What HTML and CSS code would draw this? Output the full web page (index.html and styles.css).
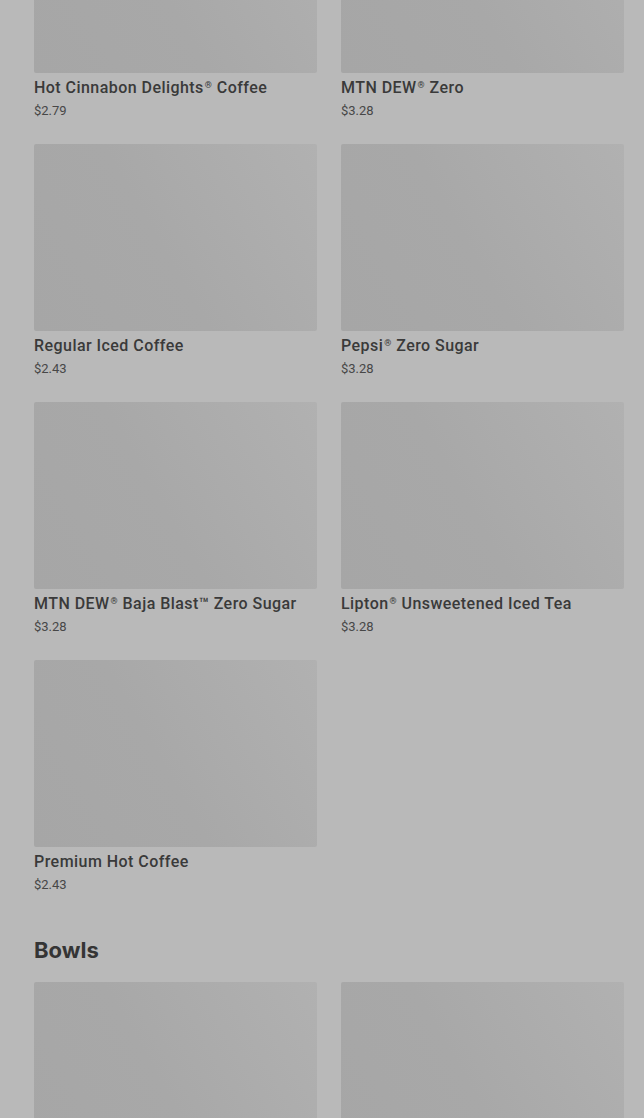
FILE: index.html
```html
<!DOCTYPE html>
<html lang="en">
<head>
  <meta charset="UTF-8">
  <meta name="viewport" content="width=device-width, initial-scale=1.0">
  <link rel="stylesheet" href="styles.css">
</head>
<body>
  <!-- Drinks -->
  <div class="menu">
    <div class="item-grid first">
      <div class="item">
        <div class="item-image"></div>
        <div class="item-name">Hot Cinnabon Delights<sup>®</sup> Coffee</div>
        <div class="item-price">$2.79</div>
      </div>
      <div class="item">
        <div class="item-image"></div>
        <div class="item-name">MTN DEW<sup>®</sup> Zero</div>
        <div class="item-price">$3.28</div>
      </div>
      <div class="item">
        <div class="item-image"></div>
        <div class="item-name">Regular Iced Coffee</div>
        <div class="item-price">$2.43</div>
      </div>
      <div class="item">
        <div class="item-image"></div>
        <div class="item-name">Pepsi<sup>®</sup> Zero Sugar</div>
        <div class="item-price">$3.28</div>
      </div>
      <div class="item">
        <div class="item-image"></div>
        <div class="item-name">MTN DEW<sup>®</sup> Baja Blast™ Zero Sugar</div>
        <div class="item-price">$3.28</div>
      </div>
      <div class="item">
        <div class="item-image"></div>
        <div class="item-name">Lipton<sup>®</sup> Unsweetened Iced Tea</div>
        <div class="item-price">$3.28</div>
      </div>
      <div class="item">
        <div class="item-image"></div>
        <div class="item-name">Premium Hot Coffee</div>
        <div class="item-price">$2.43</div>
      </div>
    </div>

    <!-- Bowls -->
    <h2 class="section-title">Bowls</h2>
    <div class="item-grid">
      <div class="item">
        <div class="item-image"></div>
      </div>
      <div class="item">
        <div class="item-image"></div>
      </div>
    </div>
  </div>
</body>
</html>
```

FILE: styles.css
```css
* {
  margin: 0;
  padding: 0;
  box-sizing: border-box;
}

body {
  background: #b9b9b9;
  font-family: Roboto, "Liberation Sans", sans-serif;
  color: #353535;
  overflow: hidden;
}

.menu {
  padding: 0 20px 0 34px;
}

/* grid of menu items */
.item-grid {
  display: grid;
  grid-template-columns: 1fr 1fr;
  column-gap: 24px;
  row-gap: 24px;
}

.item-grid.first {
  margin-top: -114px; /* page is scrolled */
}

.item-image {
  height: 187px;
  border-radius: 2px;
  background: linear-gradient(60deg, #a6a6a6 0%, #a8a8a8 45%, #b1b1b1 100%);
}

.item-name {
  margin-top: 5px;
  height: 20px;
  font-size: 16px;
  line-height: 20px;
  font-weight: 500;
  letter-spacing: 0.45px;
  color: #3a3a3a;
}

.item-name sup {
  font-size: 9px;
  line-height: 0;
  vertical-align: 5px;
  margin-left: 1px;
}

.item-price {
  margin-top: 4px;
  font-size: 13px;
  line-height: 18px;
  color: #474747;
}

.section-title {
  margin-top: 42px;
  margin-bottom: 18px;
  font-family: Inter, Roboto, sans-serif;
  font-size: 22px;
  line-height: 28px;
  font-weight: 700;
  color: #353535;
}
```
